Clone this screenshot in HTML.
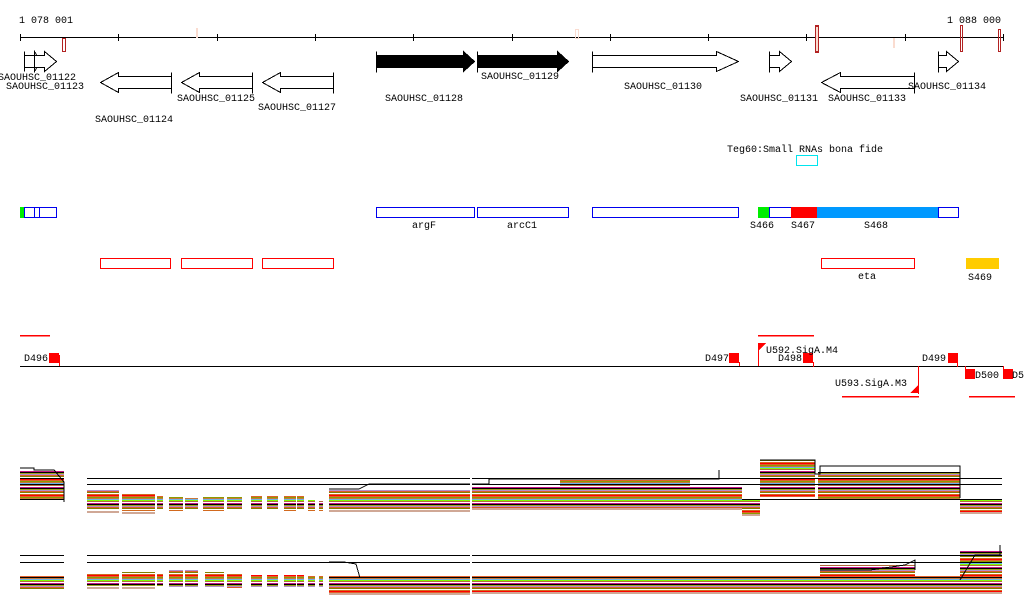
<!DOCTYPE html>
<html><head><meta charset="utf-8"><style>
html,body{margin:0;padding:0;background:#fff;width:1024px;height:611px;overflow:hidden}
svg{display:block}
text{font-family:"Liberation Mono","DejaVu Sans Mono",monospace;font-size:10px;fill:#000}
</style></head><body>
<svg width="1024" height="611" viewBox="0 0 1024 611" xmlns="http://www.w3.org/2000/svg" shape-rendering="crispEdges">
<defs>
<pattern id="st" width="40" height="16" patternUnits="userSpaceOnUse">
<rect width="40" height="16" fill="#fff"/>
<rect y="0" width="40" height="1" fill="#e0602a"/>
<rect y="1" width="40" height="1" fill="#8b9c00"/>
<rect y="2" width="40" height="1" fill="#c8783a"/>
<rect y="3" width="40" height="1" fill="#6cb4ee"/>
<rect y="4" width="40" height="1" fill="#7fff00"/>
<rect y="5" width="40" height="1" fill="#b46a3c"/>
<rect y="7" width="40" height="1" fill="#c71585"/>
<rect y="8" width="40" height="1" fill="#000"/>
<rect y="9" width="40" height="1" fill="#a0a020"/>
<rect y="10" width="40" height="1" fill="#b090d0"/>
<rect y="11" width="40" height="1" fill="#e05a2a"/>
<rect y="12" width="40" height="1" fill="#808000"/>
<rect y="14" width="40" height="1" fill="#d2691e"/>
<rect y="15" width="40" height="1" fill="#ff0000"/>
</pattern>
</defs>
<text x="19" y="23">1 078 001</text>
<text x="947" y="23">1 088 000</text>
<line x1="20" y1="37.5" x2="1003" y2="37.5" stroke="#000"/>
<g stroke="#000">
<line x1="20.5" y1="34" x2="20.5" y2="41"/><line x1="118.5" y1="34" x2="118.5" y2="41"/><line x1="217.5" y1="34" x2="217.5" y2="41"/><line x1="315.5" y1="34" x2="315.5" y2="41"/><line x1="413.5" y1="34" x2="413.5" y2="41"/><line x1="512.5" y1="34" x2="512.5" y2="41"/><line x1="610.5" y1="34" x2="610.5" y2="41"/><line x1="708.5" y1="34" x2="708.5" y2="41"/><line x1="806.5" y1="34" x2="806.5" y2="41"/><line x1="905.5" y1="34" x2="905.5" y2="41"/><line x1="1003.5" y1="34" x2="1003.5" y2="41"/>
</g>
<rect x="62.5" y="38.5" width="3" height="13" fill="none" stroke="#b22222"/>
<rect x="196" y="28" width="2" height="10" fill="#fadcd0"/>
<rect x="575.5" y="29.5" width="3" height="9" fill="none" stroke="#fadcd0"/>
<rect x="815" y="25" width="4" height="28" fill="#b22222"/><rect x="816" y="27" width="2" height="24" fill="#fadcd0"/>
<rect x="893" y="38" width="2" height="10" fill="#fadcd0"/>
<rect x="960.5" y="25.5" width="2" height="26" fill="none" stroke="#b22222"/>
<rect x="998.5" y="29.5" width="2" height="22" fill="none" stroke="#b22222"/>
<g fill="#fff" stroke="#000">
<path d="M24.5 51.5v20M24.5 55.5h10v-4l6 10-6 10v-4h-10"/>
<path d="M34.5 55.5h10v-4l12 10-12 10v-4h-10z"/>
<path d="M171.5 72.5v21M171.5 76.5h-53v-4l-18 10 18 10v-4h53z"/>
<path d="M252.5 72.5v21M252.5 76.5h-53v-4l-18 10 18 10v-4h53z"/>
<path d="M333.5 72.5v21M333.5 76.5h-53v-4l-18 10 18 10v-4h53z"/>
<path d="M592.5 51.5v21M592.5 55.5h124v-4l22 10-22 10v-4h-124z"/>
<path d="M769.5 51.5v21M769.5 55.5h10v-4l12 10-12 10v-4h-10z"/>
<path d="M914.5 72.5v21M914.5 76.5h-74v-4l-19 10 19 10v-4h74z"/>
<path d="M938.5 51.5v21M938.5 55.5h8v-4l12 10-12 10v-4h-8z"/>
</g>
<g fill="#000" stroke="#000">
<path d="M376.5 51.5v21M376.5 55.5h87v-4l11 10-11 10v-4h-87z"/>
<path d="M477.5 51.5v21M477.5 55.5h80v-4l11 10-11 10v-4h-80z"/>
</g>
<text x="-2" y="80">SAOUHSC_01122</text>
<text x="6" y="89">SAOUHSC_01123</text>
<text x="95" y="122">SAOUHSC_01124</text>
<text x="177" y="101">SAOUHSC_01125</text>
<text x="258" y="110">SAOUHSC_01127</text>
<text x="385" y="101">SAOUHSC_01128</text>
<text x="481" y="79">SAOUHSC_01129</text>
<text x="624" y="89">SAOUHSC_01130</text>
<text x="740" y="101">SAOUHSC_01131</text>
<text x="828" y="101">SAOUHSC_01133</text>
<text x="908" y="89">SAOUHSC_01134</text>
<text x="727" y="152">Teg60:Small RNAs bona fide</text>
<rect x="796.5" y="155.5" width="21" height="10" fill="none" stroke="#00e5ee"/>
<rect x="20" y="207" width="4" height="11" fill="#00ee00"/>
<g fill="none" stroke="#0000ee">
<rect x="24.5" y="207.5" width="32" height="10"/><line x1="34.5" y1="207" x2="34.5" y2="218"/><line x1="39.5" y1="207" x2="39.5" y2="218"/>
<rect x="376.5" y="207.5" width="98" height="10"/>
<rect x="477.5" y="207.5" width="91" height="10"/>
<rect x="592.5" y="207.5" width="146" height="10"/>
<rect x="769.5" y="207.5" width="22" height="10"/>
<rect x="938.5" y="207.5" width="20" height="10"/>
</g>
<rect x="758" y="207" width="11" height="11" fill="#00ee00"/>
<rect x="791" y="207" width="26" height="11" fill="#ff0000"/>
<rect x="817" y="207" width="121" height="11" fill="#0099ff"/>
<text x="412" y="228">argF</text><text x="507" y="228">arcC1</text>
<text x="750" y="228">S466</text><text x="791" y="228">S467</text><text x="864" y="228">S468</text>
<g fill="none" stroke="#ff0000">
<rect x="100.5" y="258.5" width="70" height="10"/><rect x="181.5" y="258.5" width="71" height="10"/><rect x="262.5" y="258.5" width="71" height="10"/><rect x="821.5" y="258.5" width="93" height="10"/>
</g>
<text x="858" y="279">eta</text>
<rect x="966" y="258" width="33" height="11" fill="#ffcc00"/>
<text x="968" y="280">S469</text>
<rect x="20" y="335" width="30" height="1.5" fill="#f00"/>
<rect x="758" y="335" width="56" height="1.5" fill="#f00"/>
<rect x="842" y="396" width="77" height="1.5" fill="#f00"/>
<rect x="969" y="396" width="46" height="1.5" fill="#f00"/>
<line x1="20" y1="366.5" x2="1003" y2="366.5" stroke="#000"/>
<g fill="#f00">
<rect x="49" y="353" width="10" height="10"/><rect x="59" y="355" width="1" height="11"/>
<rect x="729" y="353" width="10" height="10"/><rect x="739" y="362" width="1" height="4"/>
<path d="M758 343h8l-8 8z"/><rect x="758" y="343" width="1" height="23"/>
<rect x="803" y="353" width="10" height="10"/><rect x="813" y="362" width="1" height="5"/>
<rect x="948" y="353" width="10" height="10"/><rect x="957" y="362" width="1" height="5"/>
<path d="M918 393h-8l8-8z"/><rect x="918" y="366" width="1" height="28"/>
<rect x="965" y="369" width="10" height="10"/><rect x="965" y="366" width="1" height="5"/>
<rect x="1003" y="369" width="10" height="10"/><rect x="1003" y="366" width="1" height="5"/>
</g>
<text x="24" y="361">D496</text><text x="705" y="361">D497</text>
<text x="766" y="353">U592.SigA.M4</text><text x="778" y="361">D498</text>
<text x="922" y="361">D499</text><text x="835" y="386">U593.SigA.M3</text>
<text x="975" y="378">D500</text><text x="1012" y="378">D50</text>
<g fill="url(#st)">
<rect x="20" y="470" width="44" height="30"/>
<rect x="87" y="490" width="32" height="20"/><rect x="122" y="493" width="33" height="18"/><rect x="157" y="496" width="6" height="14"/><rect x="169" y="497" width="14" height="14"/><rect x="185" y="498" width="13" height="12"/><rect x="203" y="497" width="21" height="14"/><rect x="227" y="497" width="15" height="13"/>
<rect x="251" y="496" width="11" height="14"/><rect x="267" y="496" width="11" height="14"/><rect x="284" y="496" width="12" height="15"/><rect x="297" y="496" width="7" height="14"/><rect x="308" y="500" width="7" height="11"/><rect x="319" y="501" width="4" height="10"/>
<rect x="329" y="490" width="141" height="20"/><rect x="472" y="487" width="270" height="21"/>
<rect x="560" y="480" width="130" height="14"/>
<rect x="742" y="500" width="18" height="14"/><rect x="760" y="460" width="55" height="37"/><rect x="818" y="472" width="142" height="28"/><rect x="960" y="500" width="42" height="12"/>
</g>
<g fill="none" stroke="#a0522d">
<path d="M87 512h32M122 513h33M329 511h141M472 509h270M742 515h18M960 513h42"/>
</g>
<g fill="none" stroke="#000">
<path d="M20 468h14v2h20l10 12v20"/>
<path d="M329 489h30l10-5h120v-5h230v-9"/>
<path d="M760 460h55v14h5v-8h140v32"/>
</g>
<g stroke="#000">
<line x1="20" y1="478.5" x2="64" y2="478.5"/><line x1="87" y1="478.5" x2="1002" y2="478.5"/>
<line x1="20" y1="484.5" x2="64" y2="484.5"/><line x1="87" y1="484.5" x2="1002" y2="484.5"/>
<line x1="20" y1="499.5" x2="64" y2="499.5"/><line x1="742" y1="499.5" x2="1002" y2="499.5"/>
</g>
<rect x="470" y="470" width="2" height="45" fill="#fff"/>
<g fill="url(#st)">
<rect x="20" y="576" width="44" height="14"/>
<rect x="87" y="574" width="32" height="12"/><rect x="122" y="572" width="33" height="14"/><rect x="157" y="574" width="6" height="12"/><rect x="169" y="570" width="14" height="17"/><rect x="185" y="570" width="13" height="17"/><rect x="205" y="572" width="19" height="15"/><rect x="227" y="574" width="15" height="14"/>
<rect x="251" y="575" width="11" height="12"/><rect x="267" y="575" width="11" height="12"/><rect x="284" y="575" width="12" height="12"/><rect x="297" y="575" width="7" height="12"/><rect x="308" y="576" width="7" height="11"/><rect x="319" y="576" width="4" height="11"/>
<rect x="329" y="576" width="141" height="17"/><rect x="472" y="576" width="530" height="16"/>
<rect x="820" y="565" width="95" height="15"/><rect x="960" y="550" width="42" height="30"/>
</g>
<g fill="none" stroke="#a0522d">
<path d="M87 588h32M122 588h33M329 594h141M472 593h530"/>
</g>
<g fill="none" stroke="#000">
<path d="M329 562h15l12 2 4 14"/>
<path d="M820 570h50l35-5 10-5v10"/>
<path d="M960 580l15-25h25v-10"/>
</g>
<g stroke="#000">
<line x1="20" y1="555.5" x2="64" y2="555.5"/><line x1="87" y1="555.5" x2="1002" y2="555.5"/>
<line x1="20" y1="562.5" x2="64" y2="562.5"/><line x1="87" y1="562.5" x2="1002" y2="562.5"/>
<line x1="20" y1="577.5" x2="64" y2="577.5"/><line x1="329" y1="577.5" x2="1002" y2="577.5"/>
</g>
<rect x="470" y="550" width="2" height="45" fill="#fff"/>
</svg>
</body></html>
